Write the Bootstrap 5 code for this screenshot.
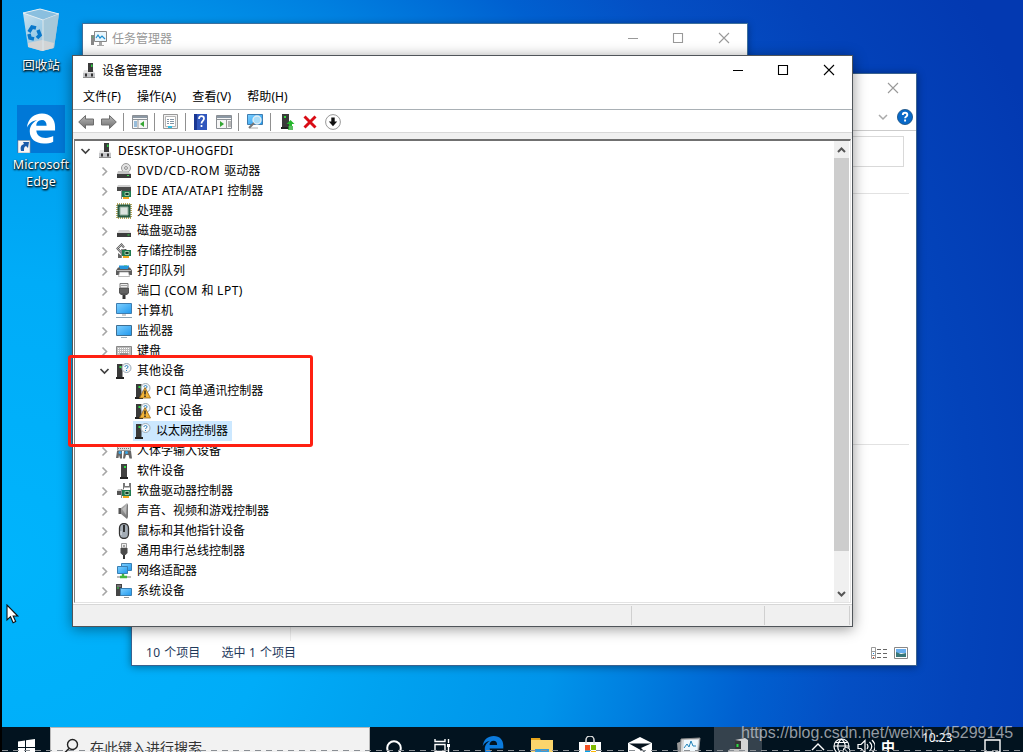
<!DOCTYPE html>
<html lang="zh-CN">
<head>
<meta charset="utf-8">
<title>设备管理器</title>
<link href="https://cdn.jsdelivr.net/npm/bootstrap@5.3.0/dist/css/bootstrap.min.css" rel="stylesheet">
<style>
html,body{height:100%}
body{margin:0;overflow:hidden;font:12px/20px "Noto Sans","Noto Sans CJK SC",sans-serif;color:#000;background:#000}
svg{display:block;flex:none}
.desk{position:relative;width:1023px;height:752px;overflow:hidden;border-left:2px solid #000;
 background:radial-gradient(circle at 0 560px,#00b4fc 0,#00acf8 280px,#00a2f0 400px,#0094ea 560px,#0080e0 640px,#0060d0 755px,#044fc4 850px,#0343ba 970px,#0339b1 1120px)}
.win{position:absolute;background:#fff;border:1px solid #5c646c;box-shadow:0 2px 13px rgba(0,0,0,.42)}
.w-task{left:80px;top:23px;width:666px;height:120px;border-color:#3d6f9c;box-shadow:0 1px 7px rgba(0,0,0,.35)}
.w-exp{left:129px;top:73px;width:786px;height:593px;border-color:#3a628f;box-shadow:0 1px 8px rgba(0,0,0,.4)}
.w-dev{left:70px;top:55px;width:781px;height:572px;border-color:#50555a}
.caption{height:29px}
.muted{color:#999}
.cap-btn{width:46px;display:flex;justify-content:center;align-items:center;padding-bottom:2px}
.menus{height:25px;border-bottom:1px solid #a9b0b5}
.menus span{letter-spacing:.1px}
.tools{height:23px;border-bottom:1px solid #d8d8d8;padding-top:2px}
.sep{width:1px;height:18px;background:#909090}
.strip{height:6px;background:#f0f0f0}
.tree{height:464px;border-top:2px solid #707070;border-left:1px solid #808080;border-right:1px solid #e3e3e3;border-bottom:1px solid #e3e3e3;margin:0 1px}
.node{height:20px;display:flex;align-items:center;white-space:nowrap}
.node svg{margin-right:4px}
.node .ic{margin-right:5px}
.lt{letter-spacing:.5px;white-space:pre}
.lt1{letter-spacing:.28px;white-space:pre}
.l0{padding-left:2px}.l1{padding-left:21px}.l2{padding-left:58px}
.l2 .pick{display:flex;align-items:center;height:20px;padding:0 4px 0 2px}
.sel{background:#cce8ff}
.scroll{width:15px;margin-right:1px;background:#f0f0f0;display:flex;flex-direction:column;align-items:center}
.thumb{width:15px;height:393px;background:#cdcdcd}
.stat{height:22px;background:#f0f0f0;border-top:1px solid #d7d7d7;margin-top:1px;display:flex;padding-top:1px}
.stat div{border-right:1px solid #d0d0d0;height:19px}
.redbox{position:absolute;left:66px;top:355px;width:245px;height:92px;border:3px solid #ff2012;border-radius:3px}
.shortcut{position:absolute;width:84px;text-align:center;color:#fff;text-shadow:1px 1px 2px #000,0 1px 2px #000;line-height:17px;font-size:12.5px}
.shortcut svg{margin:0 auto}
.exp-text{color:#1e395b}
.hr-line{background:#e2e2e2;height:1px}
.taskbar{position:absolute;left:0;top:727px;width:1021px;height:48px;background:#02131f;display:flex}
.search{width:320px;background:#f2f2f2;border:1px solid #b8b8b8;color:#333;font-size:14px;padding-left:12px}
.slot{width:48px;display:flex;justify-content:center;padding-top:9px}
.slot.on{background:#35424d}
.clock{position:absolute;left:920px;top:728px;color:#fff;font-size:12px;letter-spacing:-.1px}
.credit{position:absolute;left:739px;top:723px;color:rgba(205,210,218,.72);font:16px/20px "Liberation Sans",sans-serif;white-space:nowrap}
.dash-line{position:absolute;left:0;top:750px;width:1021px;height:1px;background:repeating-linear-gradient(90deg,#8a8f94 0 6px,transparent 6px 11px)}
.pointer{position:absolute;left:4px;top:604px}
</style>
</head>
<body>
<svg width="0" height="0" class="position-absolute">
<defs>
<linearGradient id="gb" x2="1" y2="1"><stop stop-color="#7fd0ff"/><stop offset="1" stop-color="#1f98ee"/></linearGradient>
<linearGradient id="gg" x2="0" y2="1"><stop stop-color="#b8b8b8"/><stop offset="1" stop-color="#6e6e6e"/></linearGradient>
<linearGradient id="gbin" x2="1" y2="1"><stop stop-color="#cfe3ee"/><stop offset=".5" stop-color="#9ccbe6"/><stop offset="1" stop-color="#bcc4c8"/></linearGradient>
<symbol id="open" viewBox="0 0 16 16"><path d="M4.500 6l4 4 4-4" fill="none" stroke="#404040" stroke-width="1.700"/></symbol>
<symbol id="shut" viewBox="0 0 16 16"><path d="M6.500 4.500l4 4-4 4" fill="none" stroke="#a6a6a6" stroke-width="1.600"/></symbol>
<symbol id="pc" viewBox="0 0 16 16"><path d="M7 0h5v9H7z" fill="#3b3b3b"/><path d="M10 1.500h1.500V4H10z" fill="#2fd044"/><path d="M3 7h9l2 3H2z" fill="#e4e4e4"/><path d="M2 10h12v5H2z" fill="#c4c5c8"/><path d="M2 14.500h12" stroke="#8d8d8d"/><path d="M4 10.500h2v3H4zM10 10.500h2v3h-2z" fill="#333"/><path d="M7 5h5v4H7z" fill="#3b3b3b"/></symbol>
<symbol id="drive" viewBox="0 0 16 16"><path d="M3 7h10l2 3H1z" fill="#d5d5d5"/><path d="M1 10h14v4H1z" fill="#3c3c3c"/><path d="M11.500 11.500h2v1h-2z" fill="#36df49"/></symbol>
<symbol id="dvd" viewBox="0 0 16 16"><circle cx="10" cy="5" r="4.500" fill="#e2e2e2" stroke="#999"/><circle cx="10" cy="5" r="1.400" fill="#fff" stroke="#888"/><path d="M2 8h10l3 3H1z" fill="#c3c3c3"/><path d="M1 11h14v4H1z" fill="#3c3c3c"/><path d="M11 12h2v1h-2z" fill="#3fe050"/></symbol>
<symbol id="card" viewBox="0 0 16 16"><path d="M6 7h9v6H6z" fill="#207b50"/><path d="M9 8.500h4v3H9z" fill="#173d2c" stroke="#b5dfba" stroke-width=".8"/><path d="M7 13h6v2H7z" fill="#f0a51c"/><path d="M5.500 6v9" stroke="#8a8a8a"/></symbol>
<symbol id="ide" viewBox="0 0 16 16"><path d="M2 2h12l1 2H1z" fill="#d0d0d0"/><path d="M1 4h14v4H1z" fill="#4a4a4a"/><use href="#card" y="1"/></symbol>
<symbol id="cpu" viewBox="0 0 16 16"><path d="M1 1h14v14H1z" fill="none" stroke="#b9a85c" stroke-width="2" stroke-dasharray="1 1"/><path d="M1.500 1.500h13v13h-13z" fill="#285b43"/><path d="M4 4h8v8H4z" fill="#dce3df" stroke="#8faa9b"/></symbol>
<symbol id="store" viewBox="0 0 16 16"><path d="M8 4.500L5.500 1.500 1.500 5.500l4 4.500 3-3H5.500" fill="none" stroke="#555" stroke-width="2"/><path d="M8 4.500L5.500 1.500 1.500 5.500l4 4.500 3-3H5.500" fill="none" stroke="#eee" stroke-width=".7"/><path d="M2 10l4 3v2H2z" fill="#666"/><use href="#card"/></symbol>
<symbol id="print" viewBox="0 0 16 16"><path d="M3 2.500h10V6H3z" fill="#2396dc"/><path d="M8 2.500h3V4H8z" fill="#46bf49"/><path d="M2 4.500h12l2 3V12H0V7.500z" fill="#5c5c5c"/><path d="M4 3h8v3H4z" fill="#2396dc"/><path d="M1 7.500h14" stroke="#bbb"/><path d="M3.500 9h9l1 4.500h-11z" fill="#fff" stroke="#999" stroke-width=".7"/></symbol>
<symbol id="port" viewBox="0 0 16 16"><path d="M4 .5h8V5H4z" fill="#eee" stroke="#777"/><path d="M5.500 2.500h1m1 0h1m1 0h1" stroke="#555"/><path d="M3 5h10v5l-2 2H5l-2-2z" fill="#555"/><path d="M5 6v4m2-4v4m2-4v4m2-4v4" stroke="#888" stroke-width=".6"/><path d="M6.500 12h3v4h-3z" fill="#333"/></symbol>
<symbol id="mon" viewBox="0 0 16 16"><path d="M.5 2.500h15v10H.5z" fill="url(#gb)" stroke="#3e6f93"/><path d="M5 14.500h6" stroke="#9aafbb"/></symbol>
<symbol id="comp" viewBox="0 0 16 16"><path d="M.5.500h15v10H.5z" fill="url(#gb)" stroke="#3e7db0"/><path d="M6 11h4v2H6z" fill="#ccc"/><path d="M0 14.500h16" stroke="#8ca3b2"/></symbol>
<symbol id="key" viewBox="0 0 16 16"><path d="M.5 3.500h15v9H.5z" fill="#bbb" stroke="#888"/><path d="M2 5.500h12M2 7.500h12M2 9.500h12" stroke="#fff" stroke-dasharray="1 1"/><path d="M4 11h8" stroke="#666"/></symbol>
<symbol id="unk" viewBox="0 0 16 16"><path d="M1 1h5.500v13H1z" fill="#3a3a3a"/><path d="M0 15h8" stroke="#222" stroke-width="2"/><path d="M3.500 3h2v2h-2z" fill="#32da48"/><circle cx="10.500" cy="5" r="4.500" fill="#f5f8fa" stroke="#9daab5"/><path d="M9 4c0-2 3-2 3 0 0 1-1.500 1-1.500 2m0 1v1" fill="none" stroke="#2077b9"/></symbol>
<symbol id="warn" viewBox="0 0 16 16"><use href="#unk"/><path d="M10 4.500l5.500 10.500h-11z" fill="#f3b437" stroke="#946719" stroke-width=".8"/><path d="M10 7.500v4m0 1v1.500" stroke="#222" stroke-width="1.500"/></symbol>
<symbol id="hid" viewBox="0 0 16 16"><path d="M1.500 1.500h13v6h-13z" fill="#ddd" stroke="#999"/><path d="M2 3.500h12M2 5.500h12" stroke="#777" stroke-dasharray="1 1"/><path d="M1 8h5v7.500H4L3 12l-.5 3H0zM8 8h7l1 7.500h-2.500L12.500 12H10l-1 3.500H7z" fill="#666"/><circle cx="4" cy="9.500" r="1.500" fill="#38a4e4"/><circle cx="10.500" cy="9.500" r="1.500" fill="#38a4e4"/></symbol>
<symbol id="soft" viewBox="0 0 16 16"><path d="M5 1h6v13H5z" fill="#414141"/><path d="M4 14h8v2H4z" fill="#222"/><path d="M8 3h2v2H8z" fill="#2ede42"/></symbol>
<symbol id="flop" viewBox="0 0 16 16"><path d="M7 0h8v7H7z" fill="#777"/><path d="M9 0h4v3H9zM8 4.500h6V7H8z" fill="#fff"/><path d="M2 6h6v2H1z" fill="#ccc"/><path d="M1 8h5v4H1z" fill="#555"/><use href="#card"/></symbol>
<symbol id="snd" viewBox="0 0 16 16"><path d="M2.500 5H5v6H2.500z" fill="#555"/><path d="M5 5l6-5v16l-6-5z" fill="url(#gg)"/><path d="M11 0l1 2v12l-1 2z" fill="#777"/><path d="M6 6l4-3v9" fill="#ddd" opacity=".5"/></symbol>
<symbol id="mouse" viewBox="0 0 16 16"><rect x="3.500" y=".5" width="9" height="15" rx="4.500" fill="#a4adb6" stroke="#333" stroke-width="1.300"/><path d="M8 2v7" stroke="#222" stroke-width="1.800"/><path d="M5 8v4" stroke="#e5e9ed"/></symbol>
<symbol id="usb" viewBox="0 0 16 16"><path d="M5.500 .5h5V5h-5z" fill="#eee" stroke="#999"/><path d="M7 3h2" stroke="#555"/><path d="M4.500 5h7v5L9.500 12h-3l-2-2z" fill="#4b4b4b"/><path d="M7 12h2v4H7z" fill="#333"/></symbol>
<symbol id="net" viewBox="0 0 16 16"><path d="M5.500.500h10v7h-10z" fill="url(#gb)" stroke="#397fb3"/><path d="M1.500 3.500h10v7h-10z" fill="url(#gb)" stroke="#397fb3"/><path d="M1 14h14" stroke="#bbb" stroke-width="2"/><path d="M4 14h7M7 11v2" stroke="#44b540" stroke-width="2.400"/></symbol>
<symbol id="sys" viewBox="0 0 16 16"><path d="M0 1h6v12H0z" fill="#454545"/><path d="M1 3h4" stroke="#aaa"/><path d="M1 5h2" stroke="#3bde4d"/><path d="M4.500 5.500h11v7h-11z" fill="url(#gb)" stroke="#397fb3"/><path d="M8 14.500h5" stroke="#999"/></symbol>
<symbol id="arr" viewBox="0 0 16 16"><path d="M.7 8L7.500 1.500V5h8v6h-8v3.500z" fill="url(#gg)" stroke="#6d6d6d" stroke-width="1"/></symbol>
<symbol id="panel" viewBox="0 0 16 16"><path d="M.5 1.500h15v13H.5z" fill="#f6f6f6" stroke="#8b8f94"/><path d="M1 3h14" stroke="#8c98a4" stroke-width="2"/><path d="M0 5.500h16" stroke="#8c9298"/></symbol>
<symbol id="tm" viewBox="0 0 16 16"><path d="M3.500 .5h12v10h-12z" fill="#e9f6fd" stroke="#888"/><path d="M5 7l2-3 2 3 2-2 3 3" fill="none" stroke="#1e8fd0" stroke-width="1.200"/><path d="M0 4h3v10H0z" fill="#888"/><path d="M1 6h1" stroke="#36cc4d"/><path d="M8 11h3v3h2v1H6v-1h2z" fill="#aaa"/></symbol>
<symbol id="edge" viewBox="0 0 32 32"><path d="M1 15C2 5 9 0 17 0c9 0 14 6 14 14v4H11c.5 5 4 8 10 8 3 0 6-1 8-2v6c-3 1.500-6 2-10 2C10 32 4 27 4 19c0-6 4-10 8-12-6 1-9 4-11 8zm10-2h11c0-4-2-6-5-6-4 0-6 3-6 6z"/></symbol>
<symbol id="cb-min" viewBox="0 0 12 12"><path d="M1 6.500h10" stroke="currentColor"/></symbol>
<symbol id="cb-max" viewBox="0 0 12 12"><path d="M1.500 1.500h9v9h-9z" fill="none" stroke="currentColor" stroke-width="1.100"/></symbol>
<symbol id="cb-x" viewBox="0 0 12 12"><path d="M1 1l10 10M11 1L1 11" stroke="currentColor" stroke-width="1.100"/></symbol>
</defs></svg>

<main class="desk">
  <div class="shortcut" style="left:-3px;top:8px">
    <svg width="42" height="46" viewBox="0 0 42 46"><path d="M3 5l17-4 19 5-5 34-12 3-14-4z" fill="url(#gbin)"/><path d="M3 5l17-4 19 5-16 6z" fill="#8abfdf" stroke="#e4eef3"/><path d="M23 12l-1 31 12-3 5-34z" fill="#a7c7d7" opacity=".8"/><path d="M8 35l14-3 12 3-1 5-11 3-14-4z" fill="#d2d4d5"/><path d="M23 12v31" stroke="#dce7ec"/><g fill="none" stroke="#0878cb" stroke-width="3.600"><path d="M9 24l3-5 4 1"/><path d="M18 22l2 5-3 3"/><path d="M14 31l-4-1-1-4"/></g></svg>
    <div style="margin-top:3px">回收站</div>
  </div>
  <div class="shortcut" style="left:-3px;top:105px">
    <svg width="48" height="48" viewBox="0 0 48 48"><path d="M0 0h48v48H0z" fill="#0078d7"/><use href="#edge" x="9" y="8" width="30" height="31" fill="#fff"/><path d="M1 35.500h12V48H1z" fill="#f7f7f7" stroke="#999" stroke-width=".6"/><path d="M4 46c-1-4 0-6 3-7l-1-2 6 0-1 6-2-2c-2 1-2 2-2 5z" fill="#1a5ca9"/></svg>
    <div style="margin-top:3px;letter-spacing:.1px">Microsoft<br>Edge</div>
  </div>

  <section class="win w-task">
    <div class="d-flex align-items-center muted caption ps-2">
      <svg width="16" height="16"><use href="#tm"/></svg><span style="margin-left:5px">任务管理器</span>
      <div class="d-flex ms-auto"><div class="cap-btn" style="padding-left:2px"><svg width="12" height="12"><use href="#cb-min"/></svg></div><div class="cap-btn"><svg width="12" height="12"><use href="#cb-max"/></svg></div><div class="cap-btn"><svg width="12" height="12"><use href="#cb-x"/></svg></div></div>
    </div>
  </section>

  <section class="win w-exp d-flex flex-column">
    <div class="d-flex justify-content-end muted caption"><div class="cap-btn"><svg width="12" height="12"><use href="#cb-x"/></svg></div></div>
    <div class="d-flex justify-content-end align-items-center gap-2 pe-1" style="height:27px">
      <svg width="10" height="10" viewBox="0 0 10 10"><path d="M1 3l4 4 4-4" fill="none" stroke="#aaa" stroke-width="1.500"/></svg>
      <svg width="16" height="16" viewBox="0 0 16 16" style="margin:0 -1px 0 1px"><circle cx="8" cy="8" r="7.600" fill="#0869c8" stroke="#174e80" stroke-width=".8"/><path d="M5.800 6c0-3 4.500-3 4.500 0 0 1.500-2.200 1.500-2.200 3.300m0 1.200v2" fill="none" stroke="#fff" stroke-width="1.900"/></svg>
    </div>
    <div class="hr-line" style="background:#ccc"></div>
    <div style="height:31px;border:1px solid #d9d9d9;margin:5px 12px 0 300px"></div>
    <div class="hr-line" style="margin:26px 7px 0 160px"></div>
    <div class="hr-line" style="margin:250px 7px 0 160px"></div>
    <div class="flex-grow-1 d-flex"><div style="width:159px;height:196px;border-right:1px solid #eee"></div></div>
    <div class="d-flex align-items-center exp-text" style="height:24px;padding:0 8px 1px 14px">
      <span><span class="lt">10 </span>个项目</span><span style="margin-left:21px">选中<span class="lt"> 1 </span>个项目</span>
      <svg class="ms-auto" width="17" height="14" viewBox="0 0 17 14"><path d="M.5 1.500h4v11h-4zM0 5.500h5M0 9.500h5" fill="none" stroke="#999"/><path d="M6 3.500h4m2 0h4M6 7.500h4m2 0h4M6 11.500h4m2 0h4" stroke="#666"/><path d="M2 7h1v1H2z" fill="#28d"/><path d="M2 11h1v1H2z" fill="#c31"/></svg>
      <svg width="14" height="12" viewBox="0 0 14 12" style="margin-left:6px"><path d="M.5.500h13v11H.5z" fill="#fff" stroke="#888"/><path d="M2 2h10v4H2z" fill="#69aeee"/><path d="M2 5l5 2 5-1v4H2z" fill="#397779"/></svg>
    </div>
  </section>

  <section class="win w-dev">
    <div class="d-flex align-items-center caption ps-2">
      <svg width="16" height="16"><use href="#pc"/></svg><span style="margin-left:5px">设备管理器</span>
      <div class="d-flex ms-auto"><div class="cap-btn" style="padding-left:2px"><svg width="12" height="12"><use href="#cb-min"/></svg></div><div class="cap-btn"><svg width="12" height="12"><use href="#cb-max"/></svg></div><div class="cap-btn"><svg width="12" height="12"><use href="#cb-x"/></svg></div></div>
    </div>
    <nav class="menus d-flex align-items-center" style="padding-left:10px;gap:16px"><span>文件(F)</span><span>操作(A)</span><span>查看(V)</span><span>帮助(H)</span></nav>
    <div class="tools d-flex align-items-center" style="padding-left:5px">
      <svg width="16" height="16"><use href="#arr"/></svg>
      <svg width="16" height="16" style="margin-left:7px;transform:scaleX(-1)"><use href="#arr"/></svg>
      <i class="sep" style="margin:0 8px 0 6px"></i>
      <svg width="16" height="16"><use href="#panel"/><path d="M6 6v9" stroke="#999"/><path d="M2 8h3m-3 2h3m-3 2h3" stroke="#3982bd"/><path d="M12 7v6l-4-3z" fill="#35a634"/></svg>
      <i class="sep" style="margin:0 8px 0 6px"></i>
      <svg width="15" height="16" viewBox="0 0 15 16"><path d="M.5.500h14v14H.5z" fill="#f2f2f2" stroke="#999"/><path d="M2.500 2.500h10v10h-10z" fill="#fff" stroke="#b5b5b5"/><path d="M4 5.500h7M4 7.500h7M4 9.500h7" stroke="#8494a3" stroke-dasharray="2 1 6 0"/><path d="M5 13h4" stroke="#30bce2" stroke-width="2"/></svg>
      <i class="sep" style="margin:0 8px 0 7px"></i>
      <svg width="13" height="16" viewBox="0 0 13 16"><path d="M0 0h13v16H0z" fill="#3157bd"/><path d="M0 0h3v16H0z" fill="#1a3793"/><path d="M5 5c0-4 5-3.500 5-.5 0 2.500-2.500 2.200-2.500 5m0 1.500v2" fill="none" stroke="#fff" stroke-width="1.700"/></svg>
      <svg width="16" height="16" style="margin-left:9px"><use href="#panel"/><path d="M10.500 6v9" stroke="#999"/><path d="M12 8h3m-3 2h3m-3 2h3" stroke="#777"/><path d="M4 7v6l4-3z" fill="#35a634"/></svg>
      <i class="sep" style="margin:0 8px 0 6px"></i>
      <svg width="17" height="16" viewBox="0 0 17 16"><path d="M.5.500h15v10H.5z" fill="url(#gb)" stroke="#3e7db0"/><path d="M3 14h8" stroke="#aaa"/><circle cx="10" cy="6" r="4" fill="#a9dcf8" stroke="#e1edf3" stroke-width="1.400"/><path d="M7 9l-5 5" stroke="#777" stroke-width="2"/></svg>
      <i class="sep" style="margin:0 10px 0 6px"></i>
      <svg width="14" height="16" viewBox="0 0 14 16"><path d="M1 0h7v13H1z" fill="#3b3b3b"/><path d="M0 13h8v2H0z" fill="#222"/><path d="M3 2h2v2H3z" fill="#39d940"/><path d="M9.500 6l4 4h-2.500v2h-3v-2H5.500z" fill="#25b72c"/><path d="M7 13h5m-5 2h5" stroke="#24a82c" stroke-width="1.300"/></svg>
      <svg width="14" height="14" viewBox="0 0 14 14" style="margin-left:8px"><path d="M1.500 1.500l11 11M12.500 1.500l-11 11" stroke="#d90c15" stroke-width="2.900"/></svg>
      <svg width="16" height="16" viewBox="0 0 16 16" style="margin-left:8px"><circle cx="8" cy="8" r="7.400" fill="#fff" stroke="#999"/><path d="M6.300 3.500h3.400v4h2.500L8 12.300 3.800 7.500h2.500z" fill="#111"/></svg>
    </div>
    <div class="strip"></div>
    <div class="tree d-flex">
      <div class="flex-grow-1">
        <div class="node l0"><svg width="16" height="16"><use href="#open"/></svg><svg class="ic" width="16" height="16"><use href="#pc"/></svg><span class="lt1">DESKTOP-UHOGFDI</span></div>
        <div class="node l1"><svg width="16" height="16"><use href="#shut"/></svg><svg class="ic" width="16" height="16"><use href="#dvd"/></svg><span class="lt" style="letter-spacing:.64px">DVD/CD-ROM </span>驱动器</div>
        <div class="node l1"><svg width="16" height="16"><use href="#shut"/></svg><svg class="ic" width="16" height="16"><use href="#ide"/></svg><span class="lt" style="letter-spacing:.57px">IDE ATA/ATAPI </span>控制器</div>
        <div class="node l1"><svg width="16" height="16"><use href="#shut"/></svg><svg class="ic" width="16" height="16"><use href="#cpu"/></svg>处理器</div>
        <div class="node l1"><svg width="16" height="16"><use href="#shut"/></svg><svg class="ic" width="16" height="16"><use href="#drive"/></svg>磁盘驱动器</div>
        <div class="node l1"><svg width="16" height="16"><use href="#shut"/></svg><svg class="ic" width="16" height="16"><use href="#store"/></svg>存储控制器</div>
        <div class="node l1"><svg width="16" height="16"><use href="#shut"/></svg><svg class="ic" width="16" height="16"><use href="#print"/></svg>打印队列</div>
        <div class="node l1"><svg width="16" height="16"><use href="#shut"/></svg><svg class="ic" width="16" height="16"><use href="#port"/></svg>端口<span class="lt"> (COM </span>和<span class="lt"> LPT)</span></div>
        <div class="node l1"><svg width="16" height="16"><use href="#shut"/></svg><svg class="ic" width="16" height="16"><use href="#comp"/></svg>计算机</div>
        <div class="node l1"><svg width="16" height="16"><use href="#shut"/></svg><svg class="ic" width="16" height="16"><use href="#mon"/></svg>监视器</div>
        <div class="node l1"><svg width="16" height="16"><use href="#shut"/></svg><svg class="ic" width="16" height="16"><use href="#key"/></svg>键盘</div>
        <div class="node l1"><svg width="16" height="16"><use href="#open"/></svg><svg class="ic" width="16" height="16"><use href="#unk"/></svg>其他设备</div>
        <div class="node l2"><span class="pick"><svg class="ic" width="16" height="16"><use href="#warn"/></svg><span class="lt1">PCI </span>简单通讯控制器</span></div>
        <div class="node l2"><span class="pick"><svg class="ic" width="16" height="16"><use href="#warn"/></svg><span class="lt1">PCI </span>设备</span></div>
        <div class="node l2"><span class="pick sel"><svg class="ic" width="16" height="16"><use href="#unk"/></svg>以太网控制器</span></div>
        <div class="node l1"><svg width="16" height="16"><use href="#shut"/></svg><svg class="ic" width="16" height="16"><use href="#hid"/></svg>人体学输入设备</div>
        <div class="node l1"><svg width="16" height="16"><use href="#shut"/></svg><svg class="ic" width="16" height="16"><use href="#soft"/></svg>软件设备</div>
        <div class="node l1"><svg width="16" height="16"><use href="#shut"/></svg><svg class="ic" width="16" height="16"><use href="#flop"/></svg>软盘驱动器控制器</div>
        <div class="node l1"><svg width="16" height="16"><use href="#shut"/></svg><svg class="ic" width="16" height="16"><use href="#snd"/></svg>声音、视频和游戏控制器</div>
        <div class="node l1"><svg width="16" height="16"><use href="#shut"/></svg><svg class="ic" width="16" height="16"><use href="#mouse"/></svg>鼠标和其他指针设备</div>
        <div class="node l1"><svg width="16" height="16"><use href="#shut"/></svg><svg class="ic" width="16" height="16"><use href="#usb"/></svg>通用串行总线控制器</div>
        <div class="node l1"><svg width="16" height="16"><use href="#shut"/></svg><svg class="ic" width="16" height="16"><use href="#net"/></svg>网络适配器</div>
        <div class="node l1"><svg width="16" height="16"><use href="#shut"/></svg><svg class="ic" width="16" height="16"><use href="#sys"/></svg>系统设备</div>
      </div>
      <div class="scroll">
        <svg width="15" height="17" viewBox="0 0 15 17"><path d="M4 11l3.500-3.500L11 11" fill="none" stroke="#555" stroke-width="2"/></svg>
        <div class="thumb"></div>
        <svg width="15" height="17" viewBox="0 0 15 17" class="mt-auto"><path d="M4 7l3.500 3.500L11 7" fill="none" stroke="#555" stroke-width="2"/></svg>
      </div>
    </div>
    <div class="stat"><div style="width:559px"></div><div style="width:133px"></div><div style="width:85px"></div></div>
  </section>

  <div class="redbox"></div>
  <svg class="pointer" width="14" height="21" viewBox="0 0 14 21"><path d="M1 1v15l3.500-3.300 2.600 6 2.600-1.200-2.500-5.500h4.600z" fill="#fff" stroke="#111" stroke-width="1.100"/></svg>

  <footer class="taskbar">
    <div style="width:48px;padding:12px 0 0 16px"><svg width="17" height="17" viewBox="0 0 17 17"><path d="M0 2.500l7-1V8H0zM8 1.300L17 0v8H8zM0 9h7v6.500l-7-1zM8 9h9v8l-9-1.300z" fill="#fff"/></svg></div>
    <div class="search d-flex" style="padding-top:10px"><svg width="16" height="16" viewBox="0 0 16 16"><circle cx="9.500" cy="6.500" r="5" fill="none" stroke="#222" stroke-width="1.400"/><path d="M6 10.500L1 15.500" stroke="#222" stroke-width="1.500"/></svg><span style="margin-left:11px">在此键入进行搜索</span></div>
    <div class="slot"><svg width="18" height="18" viewBox="0 0 18 18" style="margin-top:3px"><circle cx="9" cy="9" r="6.800" fill="none" stroke="#fff" stroke-width="2"/></svg></div>
    <div class="slot"><svg width="18" height="18" viewBox="0 0 18 18" style="margin-top:3px"><path d="M2 0v2.500h10V0M2 5.500h10v7H2zM2 18v-3h10v3M15.500 0v4m0 4v10" fill="none" stroke="#fff" stroke-width="1.400"/><path d="M14 5h3v3h-3z" fill="#fff"/></svg></div>
    <div class="slot" style="width:53px"><svg width="22" height="22" fill="#0b7bdd"><use href="#edge"/></svg></div>
    <div class="slot" style="width:46px"><svg width="22" height="20" viewBox="0 0 22 20" style="margin-top:2px"><path d="M0 0h9l1 3H0z" fill="#e7a51b"/><path d="M0 2h22v18H0z" fill="#fbd56c"/><path d="M4 11h14v9H4z" fill="#369ddb"/><path d="M8 14h6v6H8z" fill="#fbd56c"/></svg></div>
    <div class="slot" style="width:50px"><svg width="24" height="24" viewBox="0 0 24 24"><path d="M1 6h22v18H1z" fill="#fff"/><path d="M8 8V4a4 4 0 018 0v4" fill="none" stroke="#ddd" stroke-width="1.500"/><path d="M7 9h5v5H7z" fill="#f25022"/><path d="M13 9h5v5h-5z" fill="#7fba00"/><path d="M7 15h5v5H7z" fill="#00a4ef"/><path d="M13 15h5v5h-5z" fill="#ffb900"/></svg></div>
    <div class="slot" style="width:49px"><svg width="24" height="22" viewBox="0 0 24 22" style="margin-top:1px"><path d="M0 6l12-6 12 6v16H0z" fill="#fff"/><path d="M1 6.500h22L13 11l5 5z" fill="#06131e"/></svg></div>
    <div class="slot" style="width:50px"><svg width="24" height="20" viewBox="0 0 24 20" style="margin-top:1px"><path d="M0 6l5-2v14H1z" fill="#999"/><path d="M4 2l19-1-2 19H3z" fill="#d4d4d4" stroke="#888"/><path d="M7 3h14l-1 11H6z" fill="#eff8fc"/><path d="M7 11l3-4 2 3 2-6 2 5h3" fill="none" stroke="#2384ba"/></svg></div>
    <div class="slot on"><svg width="22" height="22" viewBox="0 0 22 22" style="margin-top:2px"><path d="M8 2l10-2 3 2v13H8z" fill="#d5d5d5"/><path d="M8 2l6 1v11H8z" fill="#373737"/><path d="M9.500 6h2v3h-2z" fill="#2be044"/><path d="M3 11h11l3 4v7H0v-7z" fill="#c4c4c4"/><path d="M1 15h16" stroke="#888"/></svg></div>
    <div class="d-flex" style="padding:11px 0 0 49px">
      <svg width="14" height="16" viewBox="0 0 14 16"><path d="M1 12l6-6 6 6" fill="none" stroke="#fff" stroke-width="1.400"/></svg>
      <svg width="18" height="18" viewBox="0 0 18 18" style="margin-left:8px"><g fill="none" stroke="#fff" stroke-width="1.200"><circle cx="8.500" cy="8.500" r="7.500"/><path d="M1 8h15M2.500 4.500h12M8.500 1c-5 4-5 11 0 15M8.500 1c5 4 5 11 0 15"/></g><circle cx="13.500" cy="13" r="3.500" fill="#02131f" stroke="#fff"/><path d="M11 10.500l5 5" stroke="#fff"/></svg>
      <svg width="18" height="18" viewBox="0 0 18 18" style="margin-left:6px"><path d="M1 6.500h3l4-4v12l-4-4H1zM10 6c1.500 2 1.500 3 0 5M12.500 4c3 3 3 6 0 9M15 2c4 4 4 9 0 13" fill="none" stroke="#fff" stroke-width="1.200"/></svg>
      <span class="text-white fw-bold" style="font-size:14px;line-height:18px;margin-left:6px">中</span>
      <svg width="17" height="18" viewBox="0 0 17 18" style="margin-left:89px"><path d="M1 2h15v12h-4v3l-3-3H1z" fill="none" stroke="#fff" stroke-width="1.400"/></svg>
    </div>
  </footer>
  <div class="clock">10:23</div>
  <div class="dash-line"></div>
  <div class="credit">https://blog.csdn.net/weixin_45299145</div>
</main>
<script src="https://cdn.jsdelivr.net/npm/bootstrap@5.3.0/dist/js/bootstrap.bundle.min.js"></script>
</body>
</html>
